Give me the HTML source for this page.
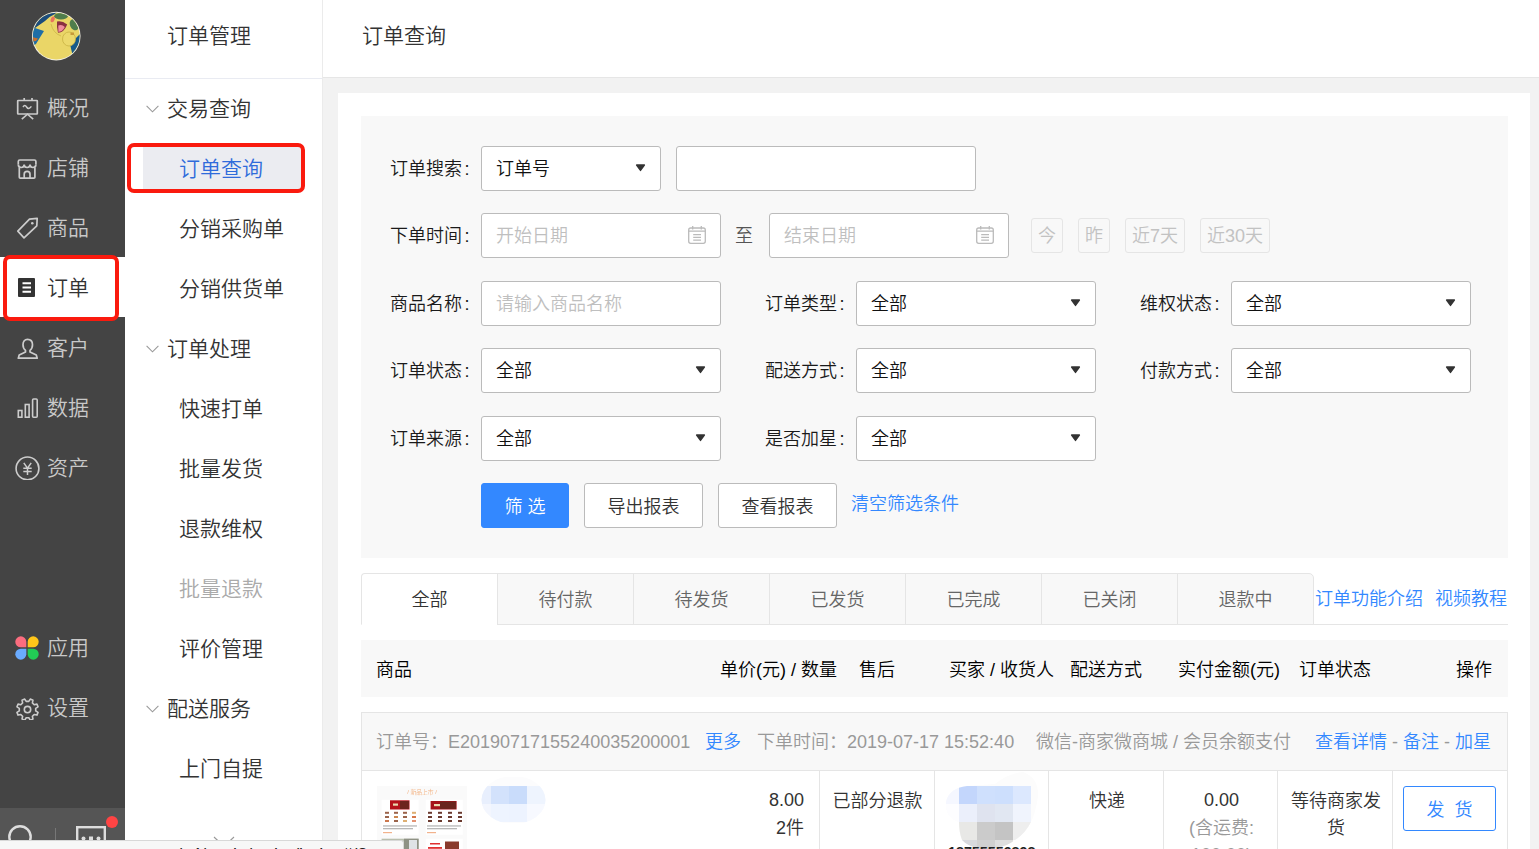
<!DOCTYPE html>
<html lang="zh-CN">
<head>
<meta charset="utf-8">
<title>订单查询</title>
<style>
*{box-sizing:border-box;margin:0;padding:0}
html,body{width:1539px;height:849px;overflow:hidden}
body{position:relative;background:#f2f2f2;font-family:"Liberation Sans","Noto Sans CJK SC",sans-serif;font-size:18px;color:#333;font-weight:350}
.abs{position:absolute}
/* left dark nav */
#nav{position:absolute;left:0;top:0;width:125px;height:849px;background:#444}
#nav .it{position:absolute;left:0;width:125px;height:60px;line-height:62px;font-size:21px;color:#c9c9c9;padding-left:47px;white-space:nowrap}
#nav .it svg{position:absolute;left:15px;top:18px;width:25px;height:25px}
#nav .it.on{color:#333}
#navfoot{position:absolute;left:0;top:808px;width:125px;height:41px;background:#555}
/* second nav */
#sub{position:absolute;left:125px;top:0;width:198px;height:849px;background:#fff;border-right:1px solid #ebebeb}
#sub .ttl{position:absolute;left:42px;top:0;height:71px;line-height:71px;font-size:21px;color:#333}
#sub .hl{position:absolute;left:0;top:78px;width:197px;height:1px;background:#e9ebf2}
#sub .g{position:absolute;left:42px;height:60px;line-height:62px;font-size:21px;color:#333;white-space:nowrap}
#sub .s{position:absolute;left:54px;height:60px;line-height:62px;font-size:21px;color:#333;white-space:nowrap}
#sub .s.dis{color:#aaa}
#sub .s.on{color:#2f6bdb}
#sub .ch{position:absolute;left:21px;width:13px;height:8px}
/* header */
#hd{position:absolute;left:323px;top:0;width:1216px;height:78px;background:#fff;border-bottom:1px solid #e6e6e6}
#hd .t{position:absolute;left:39px;top:0;height:71px;line-height:71px;font-size:21px;color:#333}
/* card */
#card{position:absolute;left:338px;top:93px;width:1192px;height:760px;background:#fff}

#flt{position:absolute;left:361px;top:116px;width:1147px;height:442px;background:#f8f8f8}
.lb{position:absolute;height:45px;line-height:47px;font-size:18px;color:#1a1a1a;text-align:right;white-space:nowrap}
.ip{position:absolute;height:45px;background:#fff;border:1px solid #bbb;border-radius:3px;line-height:45px;font-size:18px;color:#111;padding-left:14px;white-space:nowrap}
.ip.ph{color:#bfbfbf}
.ip .ar{position:absolute;right:14px;top:17px;width:11px;height:8px}
.ip .cal{position:absolute;right:13px;top:11px;width:20px;height:20px}
.qb{position:absolute;top:218px;height:35px;line-height:35px;border:1px solid #e5e5e5;border-radius:3px;background:#f8f8f8;color:#c2c2c2;font-size:18px;text-align:center;white-space:nowrap}
.bt{position:absolute;top:483px;height:45px;line-height:47px;border:1px solid #bbb;border-radius:3px;background:#fff;color:#333;font-size:18px;text-align:center;white-space:nowrap}
.bt.pri{background:#38f;border-color:#38f;color:#fff}
a,.lk{color:#38f;text-decoration:none}

#tabs{position:absolute;left:361px;top:573px;width:953px;height:52px}
#tabs .tb{position:absolute;top:0;width:137px;height:52px;line-height:52px;text-align:center;font-size:18px;color:#666;background:#f8f8f8;border:1px solid #e5e5e5;white-space:nowrap}
#tabs .tb.on{background:#fff;color:#333;border-bottom-color:#fff;border-top-left-radius:4px;width:137px}
#th{position:absolute;left:361px;top:640px;width:1147px;height:57px;background:#f8f8f8;line-height:61px;font-size:18px;color:#000}
#th span{position:absolute;top:0;white-space:nowrap}
#oh{position:absolute;left:361px;top:712px;width:1147px;height:59px;background:#f8f8f8;border:1px solid #e5e5e5;line-height:59px;font-size:18px;color:#999}
#oh span{position:absolute;top:0;white-space:nowrap}
#ob{position:absolute;left:361px;top:770px;width:1147px;height:90px;background:#fff;border:1px solid #e5e5e5}
#ob .vl{position:absolute;top:0;width:1px;height:90px;background:#e5e5e5}
#ob .c{position:absolute;font-size:18px;line-height:27px;color:#333;white-space:nowrap;text-align:center}
#sb{position:absolute;left:0;top:840px;width:404px;height:12px;background:#f7f7f7;border-top:1px solid #d8d8d8;border-right:1px solid #d8d8d8;border-top-right-radius:3px;font-size:18px;line-height:21px;color:#222;white-space:nowrap;overflow:hidden}
.lb i{display:inline-block;width:8px;text-align:center;font-style:normal;position:relative;left:1px}
</style>
</head>
<body>
<div id="nav">
<svg class="abs" style="left:31px;top:11px" width="50" height="50" viewBox="0 0 50 50">
<defs><clipPath id="avc"><circle cx="25.250" cy="25.100" r="23.400"/></clipPath></defs>
<circle cx="25.250" cy="25.100" r="24.300" fill="#f2f0e4"/>
<g clip-path="url(#avc)">
<rect width="50" height="50" fill="#ead667"/>
<path d="M0 0H27L24 3Q19 5 14 10L4 17L0 19Z" fill="#1b4c7c"/>
<path d="M0 19L4 17L13 20L8 28L5 33L0 36Z" fill="#1f6ea6"/>
<path d="M1 26L7 27.500L5 30L1 30.500Z" fill="#c8702c"/>
<path d="M39 33L50 22V44L42 46Z" fill="#175a8a"/>
<path d="M44 40L50 36V50H40Z" fill="#164a74"/>
<ellipse cx="30" cy="5.200" rx="6.800" ry="3.300" fill="#4f7d4c"/>
<ellipse cx="43.300" cy="13.700" rx="4.300" ry="5.800" fill="#4f7d4c" transform="rotate(-25 43.300 13.700)"/>
<ellipse cx="21.700" cy="8.400" rx="1.900" ry="3" fill="#e8735c" transform="rotate(22 21.700 8.400)"/>
<path d="M26 10.600Q31 9.500 36.200 13.400Q33 21.500 27 21.800Q25.500 16 26 10.600Z" fill="#8a3040"/>
<path d="M27.300 14.500Q31 13 33.800 16Q31.500 20.800 27.400 21Z" fill="#f08c9c"/>
<path d="M20 13Q22 22 30 25" fill="none" stroke="#cdb548" stroke-width=".8"/>
<ellipse cx="38" cy="28" rx="6.500" ry="7" fill="#ecd96c" stroke="#c9b244" stroke-width=".8"/>
<rect x="39.500" y="21.500" width="3.500" height="2.500" fill="#c79a3a"/>
</g>
</svg>
<div class="it" style="top:77px"><svg viewBox="0 0 25 25" fill="none" stroke="#ccc" stroke-width="1.700"><path d="M9.200 3v2.500M17 3v2.500"/><rect x="2.700" y="5.500" width="19.600" height="13.500" rx=".5"/><path d="M8 12c1.200-1.800 2.300-2 3.600 0s2.600 2.200 4.800-.6" stroke-width="1.500"/><path d="M6.800 24.200L12.500 19.200L18.200 24.200" stroke-width="1.600"/></svg>概况</div>
<div class="it" style="top:137px"><svg viewBox="0 0 25 25" fill="none" stroke="#ccc" stroke-width="1.7"><path d="M3.300 9.500V6.500Q3.300 5 4.800 5H19.400Q20.900 5 20.900 6.500V9.500"/><path d="M3.300 9.500a2.930 3 0 0 0 5.870 0a2.930 3 0 0 0 5.870 0a2.930 3 0 0 0 5.860 0"/><path d="M4.300 12.500V22.300Q4.300 23.200 5.300 23.200H18.900Q19.900 23.200 19.900 22.300V12.500"/><path d="M9.200 23V19.300a2.900 2.900 0 0 1 5.800 0V23"/></svg>店铺</div>
<div class="it" style="top:197px"><svg viewBox="0 0 25 25" fill="none" stroke="#ccc" stroke-width="1.7" stroke-linejoin="round"><path d="M14.500 4.200L22.200 3.300L21.800 10.800L9 22.800L2.800 16.200Z"/><circle cx="17.300" cy="8.200" r="1.300" fill="#ccc" stroke="none"/></svg>商品</div>
<div class="it on" style="top:257px;background:#fff"><svg viewBox="0 0 25 25"><rect x="3" y="3" width="17" height="19" rx="1" fill="#333"/><path d="M7.500 8.200h8.500M7.500 12.500h8.500M7.500 16.800h8.500" stroke="#fff" stroke-width="1.900"/></svg>订单</div>
<div class="it" style="top:317px"><svg viewBox="0 0 25 25" fill="none" stroke="#ccc" stroke-width="1.700" stroke-linejoin="round"><path d="M12.500 4.300c3.200 0 5 2.300 5 5.400 0 2.600-1.200 4.600-2.500 5.600v1.700l6.300 3 .9 3.200H3.300l.9-3.200 6.300-3v-1.700c-1.300-1-2.500-3-2.500-5.600 0-3.100 1.800-5.400 4.500-5.400z"/></svg>客户</div>
<div class="it" style="top:377px"><svg viewBox="0 0 25 25" fill="none" stroke="#ccc" stroke-width="1.600"><rect x="3.300" y="15.500" width="3.600" height="6.700"/><rect x="10.300" y="9.500" width="3.800" height="12.700"/><rect x="17.600" y="4" width="4.600" height="18.200" rx="1"/></svg>数据</div>
<div class="it" style="top:437px"><svg viewBox="0 0 25 25" fill="none" stroke="#ccc" stroke-width="1.600"><circle cx="12.500" cy="13.400" r="11.400"/><path d="M8.800 7.900l3.700 5.200 3.700-5.200M8.300 13.200h8.400M8.300 16.400h8.400M12.500 13.100v7" stroke-width="1.500"/></svg>资产</div>
<div class="it" style="top:617px"><svg viewBox="0 0 25 25"><path d="M11.800 11.800H6.300a5.500 5.500 0 1 1 5.500-5.500z" transform="translate(-.5 .5)" fill="#fb6d7f"/><path d="M13.200 11.800h5.500a5.500 5.500 0 1 0-5.500-5.500z" transform="translate(-.5 .5)" fill="#ffc61a"/><path d="M11.800 13.200H6.300a5.500 5.500 0 1 0 5.500 5.500z" transform="translate(-.5 .5)" fill="#6aabff"/><path d="M13.200 13.200h5.500a5.500 5.500 0 1 1-5.500 5.500z" transform="translate(-.5 .5)" fill="#22cc55"/></svg>应用</div>
<div class="it" style="top:677px"><svg viewBox="0 0 25 25" fill="none" stroke="#ccc" stroke-width="1.600" stroke-linejoin="round"><path d="M23.04 17.39L21.93 20.07L19.21 19.48L17.38 21.31L17.97 24.03L15.29 25.14L13.80 22.80L11.20 22.80L9.71 25.14L7.03 24.03L7.62 21.31L5.79 19.48L3.07 20.07L1.96 17.39L4.30 15.90L4.30 13.30L1.96 11.81L3.07 9.13L5.79 9.72L7.62 7.89L7.03 5.17L9.71 4.06L11.20 6.40L13.80 6.40L15.29 4.06L17.97 5.17L17.38 7.89L19.21 9.72L21.93 9.13L23.04 11.81L20.70 13.30L20.70 15.90Z"/><circle cx="12.500" cy="14.600" r="3.200"/></svg>设置</div>
<div id="navfoot">
<svg class="abs" style="left:0;top:0" width="125" height="41" viewBox="0 0 125 41"><circle cx="20" cy="29" r="10.700" fill="none" stroke="#ddd" stroke-width="2.400"/><path d="M55.500 20v21" stroke="#777" stroke-width="1"/><rect x="77.200" y="19.200" width="27.600" height="26" fill="none" stroke="#ddd" stroke-width="2.400"/><circle cx="83.500" cy="30.500" r="2" fill="#ddd"/><rect x="89" y="28.500" width="4" height="4" fill="#ddd"/><circle cx="98.500" cy="30.500" r="2" fill="#ddd"/><circle cx="112" cy="14" r="6" fill="#f44"/></svg>
</div>
</div>
<div id="sub">
<div class="ttl">订单管理</div>
<div class="hl"></div>
<svg class="ch" style="top:105px" viewBox="0 0 13 8"><path d="M.6 .8L6.500 6.800L12.400 .8" fill="none" stroke="#999" stroke-width="1.100"/></svg><div class="g" style="top:78px">交易查询</div>
<div class="abs" style="left:18px;top:145px;width:158px;height:47px;background:#ebecf1"></div>
<div class="s on" style="top:138px">订单查询</div>
<div class="s" style="top:198px">分销采购单</div>
<div class="s" style="top:258px">分销供货单</div>
<svg class="ch" style="top:345px" viewBox="0 0 13 8"><path d="M.6 .8L6.500 6.800L12.400 .8" fill="none" stroke="#999" stroke-width="1.100"/></svg><div class="g" style="top:318px">订单处理</div>
<div class="s" style="top:378px">快速打单</div>
<div class="s" style="top:438px">批量发货</div>
<div class="s" style="top:498px">退款维权</div>
<div class="s dis" style="top:558px">批量退款</div>
<div class="s" style="top:618px">评价管理</div>
<svg class="ch" style="top:705px" viewBox="0 0 13 8"><path d="M.6 .8L6.500 6.800L12.400 .8" fill="none" stroke="#999" stroke-width="1.100"/></svg><div class="g" style="top:678px">配送服务</div>
<div class="s" style="top:738px">上门自提</div>
<svg class="abs" style="left:88px;top:836px" width="22" height="12" viewBox="0 0 22 12"><path d="M1 1L11 10.500L21 1" fill="none" stroke="#999" stroke-width="1.100"/></svg></div>
<div class="abs" style="left:2.500px;top:255px;width:116.500px;height:65.500px;border:4px solid #fa1a0e;border-radius:7px"></div>
<div class="abs" style="left:127px;top:143px;width:178px;height:50px;border:4.500px solid #fa1a0e;border-radius:7px"></div>
<div id="hd"><div class="t">订单查询</div></div>
<div id="card"></div>
<div id="flt"></div>
<div class="lb" style="left:376px;top:146px;width:94px">订单搜索<i>:</i></div>
<div class="ip" style="left:481px;top:146px;width:180px">订单号<svg class="ar" viewBox="0 0 11 8"><path d="M1.600 1h7.800L5.500 6.400z" fill="#333" stroke="#333" stroke-linejoin="round" stroke-width="1.400"/></svg></div>
<div class="ip" style="left:676px;top:146px;width:300px"></div>
<div class="lb" style="left:376px;top:213px;width:94px">下单时间<i>:</i></div>
<div class="ip ph" style="left:481px;top:213px;width:240px">开始日期<svg class="cal" viewBox="0 0 20 20" fill="none" stroke="#bbb" stroke-width="1.300"><rect x="1.700" y="3" width="16.600" height="15.300" rx="2"/><path d="M1.700 6.200h16.600M5.700 1v3.500M14.300 1v3.500M6.200 9.700h7.800M6.200 12.400h7.800M6.200 15.100h7.800"/></svg></div>
<div class="lb" style="left:735px;top:213px;width:18px;color:#555">至</div>
<div class="ip ph" style="left:769px;top:213px;width:240px">结束日期<svg class="cal" viewBox="0 0 20 20" fill="none" stroke="#bbb" stroke-width="1.300"><rect x="1.700" y="3" width="16.600" height="15.300" rx="2"/><path d="M1.700 6.200h16.600M5.700 1v3.500M14.300 1v3.500M6.200 9.700h7.800M6.200 12.400h7.800M6.200 15.100h7.800"/></svg></div>
<div class="qb" style="left:1031px;width:32px">今</div>
<div class="qb" style="left:1078px;width:32px">昨</div>
<div class="qb" style="left:1125px;width:60px">近7天</div>
<div class="qb" style="left:1200px;width:70px">近30天</div>
<div class="lb" style="left:376px;top:281px;width:94px">商品名称<i>:</i></div>
<div class="ip ph" style="left:481px;top:281px;width:240px">请输入商品名称</div>
<div class="lb" style="left:751px;top:281px;width:94px">订单类型<i>:</i></div>
<div class="ip" style="left:856px;top:281px;width:240px">全部<svg class="ar" viewBox="0 0 11 8"><path d="M1.600 1h7.800L5.500 6.400z" fill="#333" stroke="#333" stroke-linejoin="round" stroke-width="1.400"/></svg></div>
<div class="lb" style="left:1126px;top:281px;width:94px">维权状态<i>:</i></div>
<div class="ip" style="left:1231px;top:281px;width:240px">全部<svg class="ar" viewBox="0 0 11 8"><path d="M1.600 1h7.800L5.500 6.400z" fill="#333" stroke="#333" stroke-linejoin="round" stroke-width="1.400"/></svg></div>
<div class="lb" style="left:376px;top:348px;width:94px">订单状态<i>:</i></div>
<div class="ip" style="left:481px;top:348px;width:240px">全部<svg class="ar" viewBox="0 0 11 8"><path d="M1.600 1h7.800L5.500 6.400z" fill="#333" stroke="#333" stroke-linejoin="round" stroke-width="1.400"/></svg></div>
<div class="lb" style="left:751px;top:348px;width:94px">配送方式<i>:</i></div>
<div class="ip" style="left:856px;top:348px;width:240px">全部<svg class="ar" viewBox="0 0 11 8"><path d="M1.600 1h7.800L5.500 6.400z" fill="#333" stroke="#333" stroke-linejoin="round" stroke-width="1.400"/></svg></div>
<div class="lb" style="left:1126px;top:348px;width:94px">付款方式<i>:</i></div>
<div class="ip" style="left:1231px;top:348px;width:240px">全部<svg class="ar" viewBox="0 0 11 8"><path d="M1.600 1h7.800L5.500 6.400z" fill="#333" stroke="#333" stroke-linejoin="round" stroke-width="1.400"/></svg></div>
<div class="lb" style="left:376px;top:416px;width:94px">订单来源<i>:</i></div>
<div class="ip" style="left:481px;top:416px;width:240px">全部<svg class="ar" viewBox="0 0 11 8"><path d="M1.600 1h7.800L5.500 6.400z" fill="#333" stroke="#333" stroke-linejoin="round" stroke-width="1.400"/></svg></div>
<div class="lb" style="left:751px;top:416px;width:94px">是否加星<i>:</i></div>
<div class="ip" style="left:856px;top:416px;width:240px">全部<svg class="ar" viewBox="0 0 11 8"><path d="M1.600 1h7.800L5.500 6.400z" fill="#333" stroke="#333" stroke-linejoin="round" stroke-width="1.400"/></svg></div>
<div class="bt pri" style="left:481px;width:88px">筛 选</div>
<div class="bt" style="left:584px;width:119px">导出报表</div>
<div class="bt" style="left:718px;width:119px">查看报表</div>
<div class="lk abs" style="left:851px;top:481px;height:45px;line-height:47px;font-size:18px;white-space:nowrap">清空筛选条件</div>
<div class="abs" style="left:361px;top:624px;width:1147px;height:1px;background:#e5e5e5"></div>
<div id="tabs">
<div class="tb on" style="left:0px">全部</div>
<div class="tb" style="left:136px">待付款</div>
<div class="tb" style="left:272px">待发货</div>
<div class="tb" style="left:408px">已发货</div>
<div class="tb" style="left:544px">已完成</div>
<div class="tb" style="left:680px">已关闭</div>
<div class="tb" style="left:816px;border-top-right-radius:5px">退款中</div>
</div>
<div class="lk abs" style="left:1315px;top:573px;height:51px;line-height:53px;font-size:18px;white-space:nowrap">订单功能介绍</div>
<div class="lk abs" style="left:1435px;top:573px;height:51px;line-height:53px;font-size:18px;white-space:nowrap">视频教程</div>
<div id="th"><span style="left:15px">商品</span><span style="right:671px">单价(元) / 数量</span><span style="left:498px">售后</span><span style="left:588px">买家 / 收货人</span><span style="left:709px">配送方式</span><span style="left:817px">实付金额(元)</span><span style="left:938px">订单状态</span><span style="right:16px">操作</span></div>
<div id="oh"><span style="left:14px">订单号：E20190717155240035200001</span><span class="lk" style="left:343px">更多</span><span style="left:395px">下单时间：2019-07-17 15:52:40</span><span style="left:674px">微信-商家微商城 / 会员余额支付</span><span style="right:16px"><span class="lk" style="position:static">查看详情</span> - <span class="lk" style="position:static">备注</span> - <span class="lk" style="position:static">加星</span></span></div>
<div id="ob">
<div class="vl" style="left:457px"></div><div class="vl" style="left:572px"></div><div class="vl" style="left:686px"></div><div class="vl" style="left:801px"></div><div class="vl" style="left:915px"></div><div class="vl" style="left:1030px"></div>
<div class="c" style="right:703px;top:17px;text-align:right"><span style="position:relative;top:-1px">8.00</span><br>2件</div>
<div class="c" style="left:458px;width:115px;top:17px">已部分退款</div>
<div class="c" style="left:688px;width:114px;top:17px">快递</div>
<div class="c" style="left:803px;width:113px;top:17px"><span style="position:relative;top:-1px">0.00</span><br><span style="color:#999">(含运费:<br>100.00)</span></div>
<div class="c" style="left:917px;width:114px;top:17px">等待商家发<br>货</div>
<div class="c" style="left:1041px;width:93px;top:15px;height:45px;line-height:47px;word-spacing:5px;border:1px solid #38f;border-radius:3px;color:#38f">发 货</div>
</div>
<svg class="abs" style="left:377px;top:786px" width="90" height="70" viewBox="0 0 90 70">
<rect width="90" height="70" fill="#fafafa"/>
<g style="filter:blur(.45px)">
<text x="45" y="7.800" font-size="5.800" fill="#f2a46a" text-anchor="middle" font-family="Liberation Sans,Noto Sans CJK SC,sans-serif" opacity=".85">/ 新品上市 /</text>
<rect x="4.600" y="13.700" width="37" height="35" fill="#fff"/><rect x="48.800" y="13.700" width="37" height="35" fill="#fff"/>
<rect x="13" y="14.300" width="19.500" height="9.200" fill="#b5121b"/><rect x="23" y="15" width="9" height="8" fill="#5a2a1e" opacity=".8"/><rect x="16" y="17.500" width="5" height="2.200" fill="#e9d9b0"/>
<rect x="53.600" y="15" width="26" height="8.500" fill="#a5121a"/><rect x="63" y="15.600" width="16" height="7.300" fill="#5a2a1e" opacity=".8"/><rect x="57" y="18" width="6" height="2.200" fill="#e9d9b0"/>
<g fill="#8a4a2c" opacity=".85"><rect x="8" y="25.800" width="4" height="2"/><rect x="17" y="25.800" width="4" height="2"/><rect x="26" y="25.800" width="4" height="2"/><rect x="35" y="25.800" width="4" height="2" fill="#d9a25a"/>
<rect x="8" y="30" width="4" height="2"/><rect x="17" y="30" width="4" height="2" fill="#c4702e"/><rect x="26" y="30" width="4" height="2"/><rect x="35" y="30" width="4" height="2" fill="#d0602a"/>
<rect x="8" y="34" width="4" height="2" fill="#c4602e"/><rect x="17" y="34" width="4" height="2"/><rect x="26" y="34" width="4" height="2" fill="#d9a25a"/><rect x="35" y="34" width="4" height="2" fill="#e0805a"/></g>
<g fill="#5a2418" opacity=".9"><rect x="51" y="25.800" width="4" height="2"/><rect x="61" y="25.800" width="4" height="2"/><rect x="71" y="25.800" width="4" height="2"/><rect x="81" y="25.800" width="4" height="2"/>
<rect x="51" y="30" width="4" height="2"/><rect x="61" y="30" width="4" height="2"/><rect x="71" y="30" width="4" height="2"/><rect x="81" y="30" width="4" height="2"/>
<rect x="51" y="34" width="4" height="2"/><rect x="61" y="34" width="4" height="2"/><rect x="71" y="34" width="4" height="2"/><rect x="81" y="34" width="4" height="2"/></g>
<g fill="#999" opacity=".7"><rect x="6" y="39.300" width="34" height="1.300"/><rect x="6" y="42" width="30" height="1.300"/><rect x="50" y="39.300" width="34" height="1.300"/><rect x="50" y="42" width="30" height="1.300"/></g>
<g fill="#f0a070" opacity=".8"><rect x="6" y="46" width="9" height="1.200"/><rect x="50" y="46" width="9" height="1.200"/></g>
<rect x="4.600" y="52.700" width="37" height="20" fill="#b9bfae"/><rect x="27" y="52.700" width="14.600" height="20" fill="#8f9285"/><rect x="32" y="54" width="8" height="10" fill="#dfe3e6"/>
<rect x="48.800" y="52.700" width="37" height="20" fill="#fff"/><rect x="68" y="55.500" width="14" height="14" fill="#8a3a2c"/><rect x="53" y="57" width="10" height="1.500" fill="#e03030"/><rect x="51" y="61" width="14" height="1.800" fill="#e03030"/>
</g>
</svg>
<svg class="abs" style="left:481px;top:777px" width="66" height="46" viewBox="0 0 66 46"><defs><clipPath id="b1"><ellipse cx="32.500" cy="23" rx="32" ry="24"/></clipPath></defs><g clip-path="url(#b1)"><rect width="66" height="46" fill="#fcfcfd"/>
<rect x="0" y="9" width="10" height="18" fill="#e8effd"/><rect x="10" y="9" width="18" height="18" fill="#d3e2fc"/><rect x="28" y="9" width="18" height="18" fill="#c9dcfb"/><rect x="46" y="9" width="20" height="18" fill="#eef4fe"/>
<rect x="0" y="27" width="10" height="18" fill="#f3f6fe"/><rect x="10" y="27" width="18" height="18" fill="#eef4ff"/><rect x="28" y="27" width="18" height="18" fill="#edf3ff"/><rect x="46" y="27" width="20" height="18" fill="#f7f9ff"/></g></svg>
<svg class="abs" style="left:943px;top:772px" width="102" height="78" viewBox="0 0 102 78"><defs><clipPath id="b2"><path d="M3 30Q6 16 24 14L52 12Q64 2 80 0Q96 6 95 24Q93 40 88 50Q82 62 72 68Q62 76 44 78Q26 76 19 68Q16 60 16 50Q2 46 3 30Z"/></clipPath></defs><g clip-path="url(#b2)"><rect width="102" height="78" fill="#fcfcfc"/>
<rect x="2" y="14" width="14" height="18" fill="#f5f7ff"/><rect x="16" y="14" width="18" height="18" fill="#c3d6fc"/><rect x="34" y="14" width="18" height="18" fill="#cfe0fd"/><rect x="52" y="14" width="18" height="18" fill="#cddffd"/><rect x="70" y="14" width="18" height="18" fill="#dce8fe"/>
<rect x="2" y="32" width="14" height="18" fill="#fdfdff"/><rect x="16" y="32" width="18" height="18" fill="#ebeffb"/><rect x="34" y="32" width="18" height="18" fill="#dfe3ef"/><rect x="52" y="32" width="18" height="18" fill="#e1e7f2"/><rect x="70" y="32" width="18" height="18" fill="#f0f4fd"/>
<rect x="16" y="50" width="18" height="18" fill="#e8e8e6"/><rect x="34" y="50" width="18" height="18" fill="#cbcbcb"/><rect x="52" y="50" width="18" height="18" fill="#c4c4c4"/><rect x="70" y="50" width="18" height="18" fill="#eee"/>
<rect x="16" y="68" width="18" height="10" fill="#d8d9dd"/><rect x="34" y="68" width="18" height="10" fill="#d0d0d0"/><rect x="52" y="68" width="18" height="10" fill="#dedede"/></g></svg>
<div class="abs" style="left:948px;top:844px;font-size:14.300px;line-height:16px;color:#222;font-weight:700">18755559898</div>
<div id="sb"><span style="position:absolute;left:37px;top:4px">www.youzan.com/v4/trade/order/index#/?type=all</span></div>
</body>
</html>
